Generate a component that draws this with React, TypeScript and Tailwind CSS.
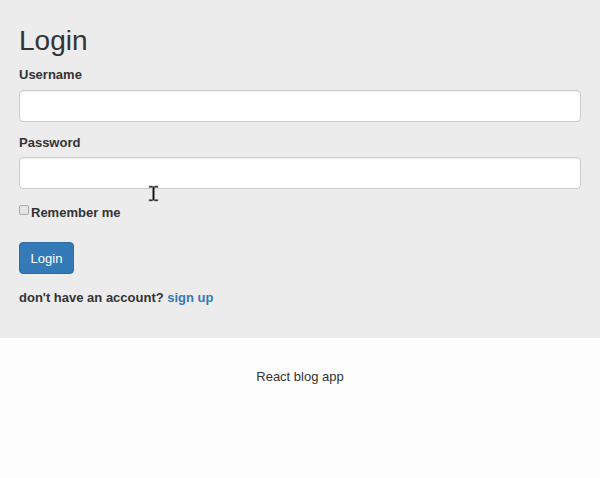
import React from 'react';

const Cursor: React.FC = () => (
  <svg
    className="absolute left-[148px] top-[185px]"
    width="11"
    height="17"
    viewBox="0 0 11 17"
  >
    <path
      d="M1 1h3.5v0.5h2V1H10v1.5H6.5v12H10V16H6.5v-0.5h-2V16H1v-1.5h3.5v-12H1z"
      fill="#111"
      stroke="#888"
      strokeWidth="0.6"
    />
  </svg>
);

const App: React.FC = () => {
  return (
    <div className="relative min-h-[478px] bg-[#fdfdfd] font-['Liberation_Sans',Arial,sans-serif] text-[13px] text-[#333]">
      {/* Login panel */}
      <section className="h-[338px] bg-[#ececec] px-[19px] pt-[25px]">
        <h2 className="text-[28px] leading-[31px] font-normal">Login</h2>

        <form className="mt-[9px]">
          <div>
            <label className="block font-bold leading-[19px] mb-[6px]">Username</label>
            <input
              type="text"
              className="block w-full h-[32px] bg-white border border-[#ccc] rounded-[4px] shadow-[inset_0_1px_1px_rgba(0,0,0,0.075)] outline-none"
            />
          </div>

          <div className="mt-[11px]">
            <label className="block font-bold leading-[19px] mb-[5px]">Password</label>
            <input
              type="password"
              className="block w-full h-[32px] bg-white border border-[#ccc] rounded-[4px] shadow-[inset_0_1px_1px_rgba(0,0,0,0.075)] outline-none"
            />
          </div>

          <div className="mt-[14px] flex items-center leading-[19px]">
            <span className="w-[10px] h-[10px] mt-[-5px] rounded-[2px] border border-[#aaa] bg-[#e6e6e6]" />
            <label className="font-bold ml-[2px]">Remember me</label>
          </div>

          <button
            type="button"
            className="mt-[20px] h-[32px] w-[55px] bg-[#337ab7] border border-[#2e6da4] rounded-[4px] text-white text-[13px] leading-[19px]"
          >
            Login
          </button>

          <p className="mt-[14px] font-bold leading-[19px]">
            don't have an account? <a className="text-[#337ab7]">sign up</a>
          </p>
        </form>
      </section>

      {/* Footer */}
      <footer className="pt-[29px] text-center leading-[19px]">React blog app</footer>

      <Cursor />
    </div>
  );
};

export default App;
